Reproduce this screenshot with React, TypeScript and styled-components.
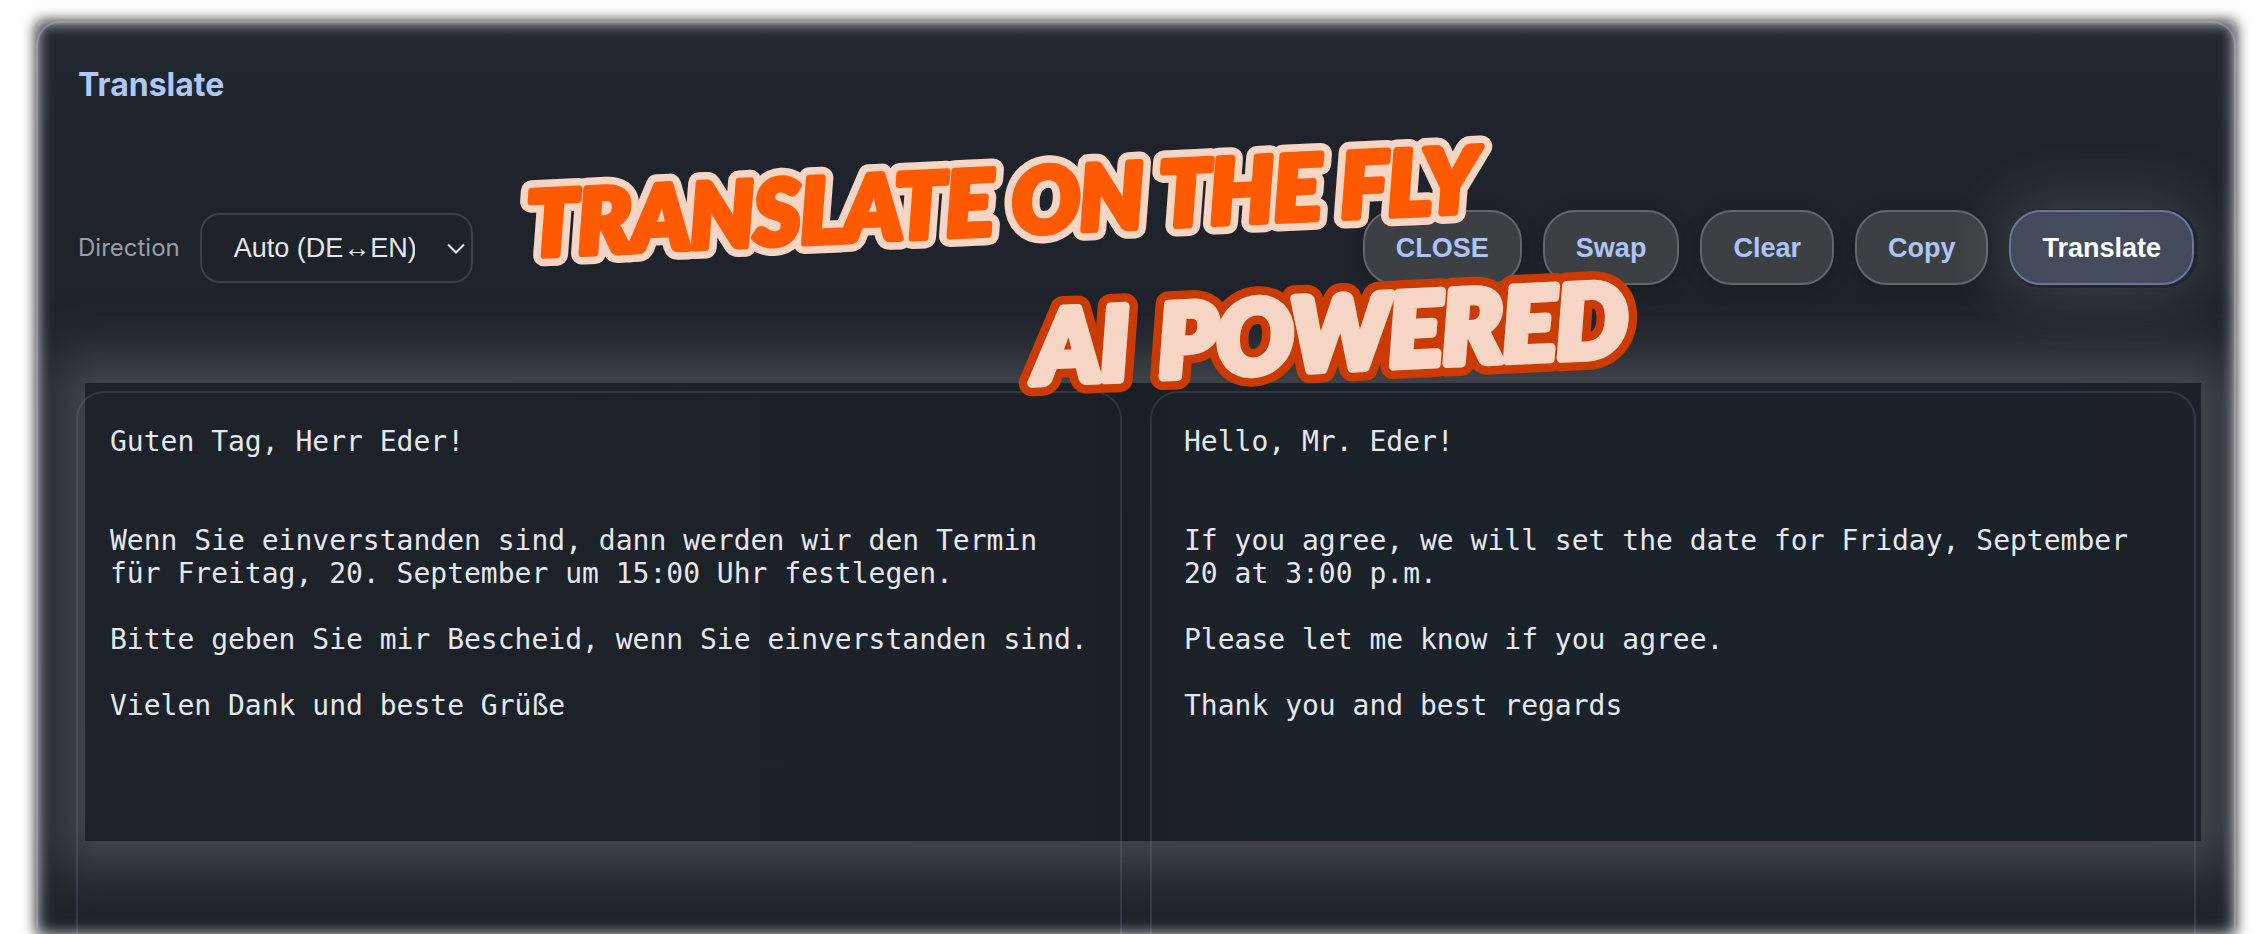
import React from "react";
import styled, { createGlobalStyle, css } from "styled-components";

const sans = `"Liberation Sans", Arial, Helvetica, sans-serif`;
const ui = `Inter, "Liberation Sans", sans-serif`;
const mono = `"DejaVu Sans Mono", Menlo, monospace`;

const GlobalStyle = createGlobalStyle`
  *, *::before, *::after { box-sizing: border-box; }
  body { margin: 0; background: #fff; }
`;

const Page = styled.div`
  position: relative;
  display: flex;
  height: 100vh;
  padding: 21px 30px 0 36px;
  overflow: hidden;
`;

const Panel = styled.main`
  position: relative;
  flex: 1;
  min-width: 0;
  display: flex;
  flex-direction: column;
  margin-bottom: -2px;
  padding: 30px 40px 0;
  border-radius: 6px;
  background: linear-gradient(180deg, #242831 0, #1f232b 110px, #1f242b 100%);
  box-shadow: 0 0 14px rgba(0, 0, 0, 0.9);
`;

const EdgeGlow = styled.div`
  position: absolute;
  inset: 0;
  z-index: 2;
  border-radius: 6px;
  box-shadow: inset 0 0 16px #fff;
  pointer-events: none;

  &::before {
    content: "";
    position: absolute;
    inset: 0;
    border: 2px solid rgba(176, 182, 200, 0.4);
    border-bottom: 0;
    border-radius: 24px 24px 0 0;
  }
`;

const Title = styled.h1`
  margin: 0;
  padding: 12px 2px 0;
  font: 700 32px/44px ${ui};
  color: #b0c8f8;
`;

const Toolbar = styled.div`
  display: flex;
  align-items: center;
  justify-content: space-between;
  margin-top: 103px;
  padding: 0 2px;
`;

const Field = styled.div`
  display: flex;
  align-items: center;
  gap: 20px;
`;

const Label = styled.label`
  font: 400 24px/32px ${ui};
  color: #999ea8;
`;

const SelectWrap = styled.div`
  position: relative;
  display: flex;
`;

const Select = styled.select`
  appearance: none;
  width: 273px;
  height: 70px;
  padding: 0 56px 0 32px;
  border: 2px solid #3a404c;
  border-radius: 20px;
  background: #1e2229;
  color: #e4e8f1;
  font: 400 27px/32px ${sans};
`;

const Chevron = styled.svg`
  position: absolute;
  right: 8px;
  top: 30px;
  width: 18px;
  height: 12px;
  fill: none;
  stroke: #e4e8f1;
  stroke-width: 2;
  pointer-events: none;
`;

const Actions = styled.div`
  display: flex;
  gap: 21px;
`;

const Button = styled.button<{ $primary?: boolean }>`
  height: 75px;
  padding: 0 31px;
  border: 2px solid #62666b;
  border-radius: 32px;
  background: #3c4045;
  color: #adc5f6;
  font: 700 27px/32px ${sans};
  box-shadow: 0 4px 20px rgba(0, 0, 0, 0.2);
  ${(p) =>
    p.$primary &&
    css`
      border-color: #67789a;
      background: radial-gradient(circle, #444e5f, #444a5b 70%);
      color: #fff;
      box-shadow: 2px 1px 0 2px #22262f, 0 0 70px 8px rgba(255, 255, 255, 0.15);
    `}
`;

const Panes = styled.div`
  position: relative;
  flex: 1;
  display: grid;
  grid-template-columns: 1fr 1fr;
  gap: 28px;
  margin-top: 106px;
  clip-path: inset(-120px -40px 0 -40px);
`;

const Backdrop = styled.div`
  position: absolute;
  inset: -8px -5px 95px 9px;
  background: linear-gradient(90deg, #1e2229, #1d2229 46%, #1b1e25 49%, #1b1e25 50%, #1d2229 53%, #1b2229 60%, #1b2229 92%, #1e2129);
  box-shadow: 0 0 44px 28px #42464b;
`;

const TextPane = styled.textarea`
  position: relative;
  min-width: 0;
  padding: 32px 28px 0 32px;
  border: 2px solid rgba(112, 122, 150, 0.25);
  border-bottom: 0;
  border-radius: 28px 28px 0 0;
  background: transparent;
  color: #e4e8f1;
  font: 400 28px/33px ${mono};
  resize: none;
  overflow: hidden;
`;

const Banner = styled.svg`
  position: absolute;
  z-index: 3;
  left: 500px;
  top: 110px;
  width: 1160px;
  height: 300px;
  pointer-events: none;
  font-family: Lato, "Liberation Sans", sans-serif;
  font-weight: 900;
  font-style: italic;
  stroke-linejoin: round;
`;

const german = `Guten Tag, Herr Eder!


Wenn Sie einverstanden sind, dann werden wir den Termin für Freitag, 20. September um 15:00 Uhr festlegen.

Bitte geben Sie mir Bescheid, wenn Sie einverstanden sind.

Vielen Dank und beste Grüße`;

const english = `Hello, Mr. Eder!


If you agree, we will set the date for Friday, September 20 at 3:00 p.m.

Please let me know if you agree.

Thank you and best regards`;

export default function App() {
  return (
    <>
      <GlobalStyle />
      <Page>
        <Panel>
          <Title>Translate</Title>
          <Toolbar>
            <Field>
              <Label htmlFor="direction">Direction</Label>
              <SelectWrap>
                <Select id="direction" defaultValue="auto">
                  <option value="auto">Auto (DE↔EN)</option>
                </Select>
                <Chevron viewBox="0 0 18 12" aria-hidden="true">
                  <path d="M1 1.5 9 9.5 17 1.5" />
                </Chevron>
              </SelectWrap>
            </Field>
            <Actions>
              <Button type="button">CLOSE</Button>
              <Button type="button">Swap</Button>
              <Button type="button">Clear</Button>
              <Button type="button">Copy</Button>
              <Button type="button" $primary>Translate</Button>
            </Actions>
          </Toolbar>
          <Panes>
            <Backdrop />
            <TextPane aria-label="Source text" spellCheck={false} defaultValue={german} />
            <TextPane aria-label="Translation" spellCheck={false} defaultValue={english} />
          </Panes>
          <EdgeGlow />
        </Panel>
        <Banner viewBox="0 0 1160 300">
          <g stroke="#f6d5c5" strokeWidth="22">
            <use href="#headline" />
          </g>
          <g fill="#ff5a00" stroke="#ff5a00" strokeWidth="7">
            <text id="headline" fontSize="89" transform="translate(29 146) rotate(-2.7)">TRANSLATE ON THE FLY</text>
          </g>
          <g stroke="#cb3b00" strokeWidth="26">
            <use href="#tagline" />
          </g>
          <g fill="#f6d5c5" stroke="#f6d5c5" strokeWidth="9">
            <text id="tagline" fontSize="100" transform="translate(536 273) rotate(-2.7)">AI <tspan dx="8">POWERED</tspan></text>
          </g>
        </Banner>
      </Page>
    </>
  );
}
